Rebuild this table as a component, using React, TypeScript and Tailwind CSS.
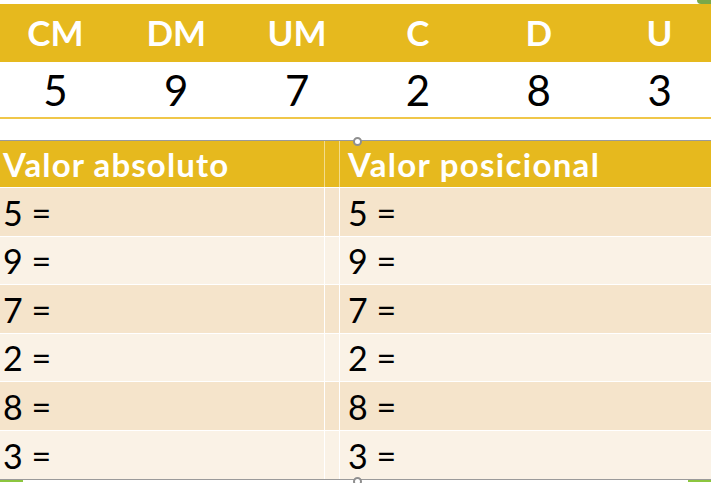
import React from 'react';

const places = [
  { label: 'CM', digit: '5' },
  { label: 'DM', digit: '9' },
  { label: 'UM', digit: '7' },
  { label: 'C', digit: '2' },
  { label: 'D', digit: '8' },
  { label: 'U', digit: '3' },
];

const font = { fontFamily: 'Lato, "Open Sans", sans-serif' };

const Handle: React.FC<{ top: number }> = ({ top }) => (
  <div
    className="absolute left-[353px] w-[9px] h-[9px] rounded-full bg-white border-2 border-[#8f8f8f]"
    style={{ top }}
  />
);

const App: React.FC = () => {
  return (
    <div className="relative w-[711px] h-[483px] overflow-hidden bg-white" style={font}>
      <div className="-ml-[5px] w-[725px]">
        {/* top strip */}
        <div className="h-[4px] flex justify-end">
          <div className="w-[14px] h-[4px] mr-[9px] bg-[#7aa84a] rounded-bl-full"></div>
        </div>

        {/* place value table */}
        <div className="grid grid-cols-6 h-[58px] bg-[#e6b91e]">
          {places.map((p) => (
            <div key={p.label} className="flex items-center justify-center text-white font-bold text-[35px] leading-none pb-[1px]">
              {p.label}
            </div>
          ))}
        </div>
        <div className="grid grid-cols-6 h-[57px] border-b-2 border-[#f0c74a]">
          {places.map((p) => (
            <div key={p.label} className="flex items-center justify-center text-black text-[42px] leading-none pt-[1px]">
              {p.digit}
            </div>
          ))}
        </div>

        <div className="h-[21px]"></div>

        {/* values table */}
        <div className="border-y border-[#9a9a9a]">
          <div className="grid grid-cols-[330px_15px_1fr] h-[47px] bg-[#e6b91e] border-b border-white">
            <div className="flex items-center pl-[8px] pt-[1px] text-white font-bold text-[33px] tracking-[1.1px] leading-none border-r border-[#f3dc8a]">
              Valor absoluto
            </div>
            <div className="border-r border-[#f3dc8a]"></div>
            <div className="flex items-center pl-[8px] pt-[1px] text-white font-bold text-[33px] tracking-[1.3px] leading-none">
              Valor posicional
            </div>
          </div>
          {places.map((p, i) => (
            <div
              key={p.label}
              className={`grid grid-cols-[330px_15px_1fr] h-[48.5px] ${i < 5 ? 'border-b border-white' : ''} ${i % 2 === 0 ? 'bg-[#f5e4cb]' : 'bg-[#faf2e6]'}`}
            >
              <div className="flex items-center pl-[8px] pt-[2px] text-black text-[34px] leading-none border-r border-white">
                {p.digit} =
              </div>
              <div className="border-r border-white"></div>
              <div className="flex items-center pl-[8px] pt-[2px] text-black text-[34px] leading-none">
                {p.digit} =
              </div>
            </div>
          ))}
        </div>

        {/* bottom strip */}
        <div className="h-[2px] flex justify-between">
          <div className="w-[23px] ml-[5px] bg-[#8cc63f]"></div>
          <div className="w-[23px] mr-[9px] bg-[#8cc63f]"></div>
        </div>
      </div>

      <Handle top={137} />
      <Handle top={477} />
    </div>
  );
};

export default App;
